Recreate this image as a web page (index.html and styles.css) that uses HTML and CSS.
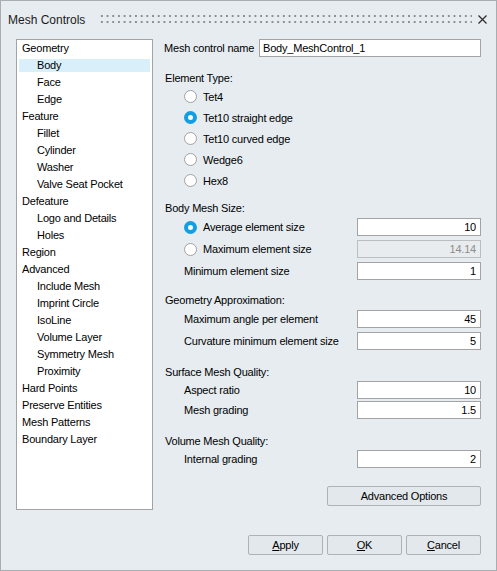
FILE: index.html
```html
<!DOCTYPE html>
<html>
<head>
<meta charset="utf-8">
<link rel="stylesheet" href="styles.css">
</head>
<body>
<div class="window">
  <div class="titlebar">
    <span class="title">Mesh Controls</span>
    <span class="grip"></span>
    <span class="close"><svg width="9" height="9" viewBox="0 0 9 9"><path d="M0.5 0.5 L8.5 8.5 M8.5 0.5 L0.5 8.5" stroke="#2b2b2b" stroke-width="1.2" fill="none"/></svg></span>
  </div>
  <div class="main">
    <ul class="tree">
      <li>Geometry</li>
      <li class="sub sel">Body</li>
      <li class="sub">Face</li>
      <li class="sub">Edge</li>
      <li>Feature</li>
      <li class="sub">Fillet</li>
      <li class="sub">Cylinder</li>
      <li class="sub">Washer</li>
      <li class="sub">Valve Seat Pocket</li>
      <li>Defeature</li>
      <li class="sub">Logo and Details</li>
      <li class="sub">Holes</li>
      <li>Region</li>
      <li>Advanced</li>
      <li class="sub">Include Mesh</li>
      <li class="sub">Imprint Circle</li>
      <li class="sub">IsoLine</li>
      <li class="sub">Volume Layer</li>
      <li class="sub">Symmetry Mesh</li>
      <li class="sub">Proximity</li>
      <li>Hard Points</li>
      <li>Preserve Entities</li>
      <li>Mesh Patterns</li>
      <li>Boundary Layer</li>
    </ul>
    <div class="form">
      <div class="namerow">
        <span>Mesh control name</span>
        <input class="field name" type="text" value="Body_MeshControl_1">
      </div>

      <div class="heading h-elem">Element Type:</div>
      <div class="radiorow"><span class="radio"></span><span>Tet4</span></div>
      <div class="radiorow"><span class="radio on"></span><span>Tet10 straight edge</span></div>
      <div class="radiorow"><span class="radio"></span><span>Tet10 curved edge</span></div>
      <div class="radiorow"><span class="radio"></span><span>Wedge6</span></div>
      <div class="radiorow"><span class="radio"></span><span>Hex8</span></div>

      <div class="heading h-body">Body Mesh Size:</div>
      <div class="valrow tall"><span class="lab"><span class="radio on"></span><span>Average element size</span></span><input class="field num" type="text" value="10"></div>
      <div class="valrow tall"><span class="lab"><span class="radio"></span><span>Maximum element size</span></span><input class="field num disabled" type="text" value="14.14" disabled></div>
      <div class="valrow tall"><span class="lab">Minimum element size</span><input class="field num" type="text" value="1"></div>

      <div class="heading h-geo">Geometry Approximation:</div>
      <div class="valrow tall"><span class="lab">Maximum angle per element</span><input class="field num" type="text" value="45"></div>
      <div class="valrow tall"><span class="lab">Curvature minimum element size</span><input class="field num" type="text" value="5"></div>

      <div class="heading h-surf">Surface Mesh Quality:</div>
      <div class="valrow"><span class="lab">Aspect ratio</span><input class="field num" type="text" value="10"></div>
      <div class="valrow"><span class="lab">Mesh grading</span><input class="field num" type="text" value="1.5"></div>

      <div class="heading h-vol">Volume Mesh Quality:</div>
      <div class="valrow"><span class="lab">Internal grading</span><input class="field num" type="text" value="2"></div>

      <button class="btn adv">Advanced Options</button>
    </div>
  </div>
  <div class="footer">
    <button class="btn"><u>A</u>pply</button>
    <button class="btn"><u>O</u>K</button>
    <button class="btn"><u>C</u>ancel</button>
  </div>
</div>
</body>
</html>
```

FILE: styles.css
```css
html, body {
  margin: 0;
  padding: 0;
}

body {
  font-family: "Liberation Sans", Arial, sans-serif;
  font-size: 11px;
  letter-spacing: -0.2px;
  color: #000;
  background: #e6ecf0;
}

.window {
  box-sizing: border-box;
  width: 497px;
  height: 571px;
  border: 1px solid #a8adb1;
  background: #e6ecf0;
  display: flex;
  flex-direction: column;
}

.titlebar {
  height: 38px;
  display: flex;
  align-items: center;
  padding: 0 9px 0 7px;
  flex: none;
}

.title {
  font-size: 12px;
  letter-spacing: 0;
  color: #1b1b1b;
}

.grip {
  flex: 1;
  height: 12px;
  margin: -2px 6px 0 14px;
  background-image: radial-gradient(circle at center, #8a8f94 0, #8a8f94 0.9px, transparent 1.3px);
  background-size: 5.7px 6px;
}

.close {
  width: 9px;
  height: 9px;
  display: flex;
  margin-top: -2px;
}

.main {
  display: flex;
  gap: 11px;
  padding: 0 15px;
  flex: none;
}

.tree {
  box-sizing: border-box;
  width: 137px;
  height: 471px;
  border: 1px solid #a3a3a3;
  background: #fff;
  margin: 0;
  padding: 0 2px;
  list-style: none;
  display: flex;
  flex-direction: column;
}

.tree li {
  height: 13px;
  line-height: 13px;
  margin: 2px 0;
  padding-left: 3px;
  white-space: nowrap;
}

.tree li.sub {
  padding-left: 18px;
}

.tree li.sel {
  background: #d9f0fa;
}

.form {
  flex: 1;
  display: flex;
  flex-direction: column;
}

.namerow {
  height: 18px;
  display: flex;
  align-items: center;
  justify-content: space-between;
}

.field {
  box-sizing: border-box;
  height: 18px;
  border: 1px solid #a3a3a3;
  background: #fff;
  font-family: "Liberation Sans", Arial, sans-serif;
  font-size: 11px;
  letter-spacing: -0.2px;
  color: #000;
  margin: 0;
  outline: none;
}

.field.name {
  width: 222px;
  padding: 0 3px;
}

.field.num {
  width: 124px;
  padding: 0 4px;
  text-align: right;
}

.field.disabled {
  background: #e9ecee;
  border-color: #bcbfc1;
  color: #8c8c8c;
  -webkit-text-fill-color: #8c8c8c;
  opacity: 1;
}

.heading {
  height: 16px;
  line-height: 16px;
  padding-left: 1px;
}

.h-elem { margin-top: 13px; }
.h-body { margin-top: 9px; }
.h-geo { margin-top: 10px; }
.h-surf { margin-top: 12px; }
.h-vol { margin-top: 13px; }

.radiorow {
  height: 21px;
  display: flex;
  align-items: center;
  gap: 6px;
  padding-left: 20px;
}

.radio {
  box-sizing: border-box;
  width: 13px;
  height: 13px;
  border-radius: 50%;
  border: 1px solid #a2a2a2;
  background: #fff;
  flex: none;
}

.radio.on {
  border: 4px solid #139ee2;
  background: #fff;
}

.valrow {
  height: 20px;
  display: flex;
  align-items: center;
  justify-content: space-between;
}

.valrow.tall {
  height: 22px;
}

.lab {
  padding-left: 20px;
  display: flex;
  align-items: center;
  gap: 6px;
}

.btn {
  box-sizing: border-box;
  height: 20px;
  width: 75px;
  border: 1px solid #adb2b6;
  border-radius: 2px;
  background: #e3e8ec;
  font-family: "Liberation Sans", Arial, sans-serif;
  font-size: 11px;
  letter-spacing: -0.2px;
  color: #000;
  padding: 0;
  margin: 0;
}

.btn.adv {
  width: 154px;
  align-self: flex-end;
  margin-top: 17px;
}

.footer {
  display: flex;
  justify-content: flex-end;
  gap: 4px;
  padding: 25px 15px 0;
}
```
